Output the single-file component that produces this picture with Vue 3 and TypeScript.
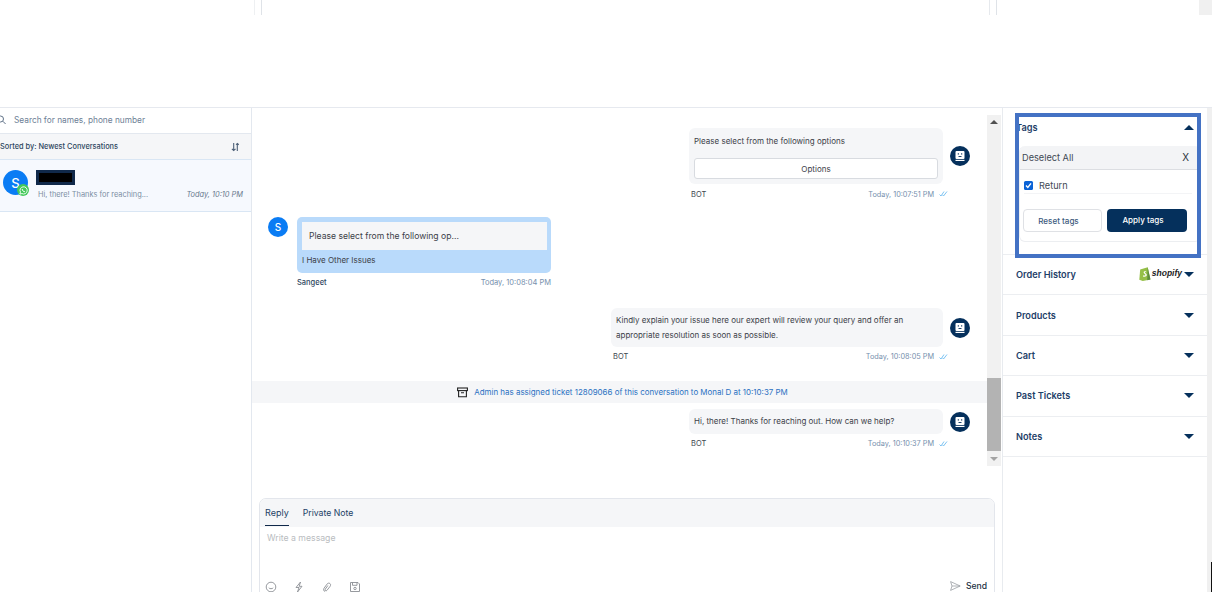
<script setup lang="ts">
interface Section { title: string; shopify?: boolean }
const sections: Section[] = [
  { title: 'Order History', shopify: true },
  { title: 'Products' },
  { title: 'Cart' },
  { title: 'Past Tickets' },
  { title: 'Notes' }
]
</script>

<template>
  <div class="page">
    <div class="strip">
      <i class="s1"></i><i class="s2"></i><i class="s3"></i><i class="s4"></i><i class="s5"></i>
    </div>
    <div class="main">
      <aside class="left">
        <div class="search">
          <svg width="10" height="10" viewBox="0 0 10 10" fill="none" stroke="#5f7187" stroke-width="1"><circle cx="3.5" cy="4" r="3"/><path d="M5.8 6.2 8.6 9"/></svg>
          <span>Search for names, phone number</span>
        </div>
        <div class="sort">
          <span>Sorted by: Newest Conversations</span>
          <svg width="9" height="10" viewBox="0 0 10 11" fill="none" stroke="#4a5d75" stroke-width="1.2"><path d="M3 1v8.5M1 7.5l2 2 2-2M7 10V1.5M5.6 3 7 1.5 8.6 3"/></svg>
        </div>
        <div class="conv">
          <div class="conv-av">
            S
            <span class="wa">
              <svg width="9" height="9" viewBox="0 0 10 10" fill="none" stroke="#fff" stroke-width="1"><path d="M1 9l.6-2.2A4 4 0 1 1 3.2 8.4z"/><path d="M3.6 3.4c0 1.6 1.2 3 3 3" stroke-width="1.1"/></svg>
            </span>
          </div>
          <div class="conv-body">
            <div class="redact"><b></b></div>
            <div class="conv-line">
              <span class="preview">Hi, there! Thanks for reaching...</span>
              <em>Today, 10:10 PM</em>
            </div>
          </div>
        </div>
      </aside>

      <section class="center">
        <div class="scroll-area">
          <div class="thread">
            <div class="msg bot first">
              <div class="stack w254">
                <div class="bubble opt">
                  <p>Please select from the following options</p>
                  <div class="opt-btn">Options</div>
                </div>
                <div class="meta"><span>BOT</span><span class="time">Today, 10:07:51 PM <svg class="tick" width="9" height="6" viewBox="0 0 9 6" fill="none" stroke="#6fbdf0" stroke-width=".9"><path d="M.5 3.5 2 5 5 .5M3.5 3.8 4.5 5l3.5-4.5"/></svg></span></div>
              </div>
              <div class="bot-av"><svg width="12" height="12" viewBox="0 0 12 12"><rect x="1.5" y="1" width="9" height="8" rx="1" fill="#fff"/><rect x="3.8" y="3.2" width="1" height="1.4" fill="#05305c"/><rect x="7.2" y="3.2" width="1" height="1.4" fill="#05305c"/><rect x="4.5" y="6" width="3" height=".9" fill="#05305c"/><rect x="1.5" y="9.8" width="9" height="1.2" fill="#fff"/></svg></div>
            </div>

            <div class="msg user">
              <div class="user-av">S</div>
              <div class="stack w254">
                <div class="bubble blue">
                  <div class="quote">Please select from the following op...</div>
                  <div class="answer">I Have Other Issues</div>
                </div>
                <div class="meta user-meta"><span class="name">Sangeet</span><span class="time">Today, 10:08:04 PM</span></div>
              </div>
            </div>

            <div class="msg bot second">
              <div class="stack w332">
                <div class="bubble long">Kindly explain your issue here our expert will review your query and offer an appropriate resolution as soon as possible.</div>
                <div class="meta"><span>BOT</span><span class="time">Today, 10:08:05 PM <svg class="tick" width="9" height="6" viewBox="0 0 9 6" fill="none" stroke="#6fbdf0" stroke-width=".9"><path d="M.5 3.5 2 5 5 .5M3.5 3.8 4.5 5l3.5-4.5"/></svg></span></div>
              </div>
              <div class="bot-av"><svg width="12" height="12" viewBox="0 0 12 12"><rect x="1.5" y="1" width="9" height="8" rx="1" fill="#fff"/><rect x="3.8" y="3.2" width="1" height="1.4" fill="#05305c"/><rect x="7.2" y="3.2" width="1" height="1.4" fill="#05305c"/><rect x="4.5" y="6" width="3" height=".9" fill="#05305c"/><rect x="1.5" y="9.8" width="9" height="1.2" fill="#fff"/></svg></div>
            </div>

            <div class="system">
              <svg width="11" height="11" viewBox="0 0 11 11" fill="none" stroke="#222" stroke-width="1.1"><rect x=".6" y="1" width="9.8" height="2.6"/><path d="M1.6 3.6v6.2h7.8V3.6M4 5.8h3"/></svg>
              <span>Admin has assigned ticket 12809066 of this conversation to Monal D at 10:10:37 PM</span>
            </div>

            <div class="msg bot third">
              <div class="stack w254">
                <div class="bubble short">Hi, there! Thanks for reaching out. How can we help?</div>
                <div class="meta"><span>BOT</span><span class="time">Today, 10:10:37 PM <svg class="tick" width="9" height="6" viewBox="0 0 9 6" fill="none" stroke="#6fbdf0" stroke-width=".9"><path d="M.5 3.5 2 5 5 .5M3.5 3.8 4.5 5l3.5-4.5"/></svg></span></div>
              </div>
              <div class="bot-av"><svg width="12" height="12" viewBox="0 0 12 12"><rect x="1.5" y="1" width="9" height="8" rx="1" fill="#fff"/><rect x="3.8" y="3.2" width="1" height="1.4" fill="#05305c"/><rect x="7.2" y="3.2" width="1" height="1.4" fill="#05305c"/><rect x="4.5" y="6" width="3" height=".9" fill="#05305c"/><rect x="1.5" y="9.8" width="9" height="1.2" fill="#fff"/></svg></div>
            </div>
          </div>
          <div class="vbar">
            <i class="up"></i>
            <div class="track"><div class="thumb"></div></div>
            <i class="down"></i>
          </div>
        </div>

        <div class="composer">
          <div class="tabs">
            <span class="tab active">Reply</span>
            <span class="tab">Private Note</span>
          </div>
          <div class="write">Write a message</div>
          <div class="tools">
            <div class="tool-icons">
              <svg width="12" height="12" viewBox="0 0 12 12" fill="none" stroke="#8b8f94" stroke-width=".9"><circle cx="6" cy="6" r="4.8"/><path d="M3.8 6.8c.6 1.2 3.8 1.2 4.4 0"/></svg>
              <svg width="12" height="12" viewBox="0 0 12 12" fill="none" stroke="#8b8f94" stroke-width=".9"><path d="M7.5 1 3 6.5h3L4.5 11 9 5.3H6.2z"/></svg>
              <svg width="12" height="12" viewBox="0 0 12 12" fill="none" stroke="#8b8f94" stroke-width=".9"><path d="M4 10.5c-1.5-.6-1.8-2-1-3.2l3-4.2c.8-1 2-1.3 2.9-.6.9.7.9 1.8.2 2.8L6 9.3c-.5.6-1.1.7-1.6.4-.5-.4-.5-1-.1-1.6l2.6-3.6"/></svg>
              <svg width="12" height="12" viewBox="0 0 12 12" fill="none" stroke="#8b8f94" stroke-width=".9"><path d="M1.5 1.5h7.5l1.5 1.5v7.5h-9z"/><path d="M3.5 1.5v2.8h4.5V1.5"/><circle cx="6" cy="7.5" r="1.2"/></svg>
            </div>
            <div class="send">
              <svg width="11" height="10" viewBox="0 0 11 10" fill="none" stroke="#9a9ea3" stroke-width=".8"><path d="M.6.6 10.2 5 .6 9.4 2 5zM2 5h8"/></svg>
              <span>Send</span>
            </div>
          </div>
        </div>
      </section>

      <aside class="right">
        <div class="tags-block">
          <div class="row tags-row">
            <span class="title">Tags</span>
            <i class="caret-up"></i>
          </div>
          <div class="tag-box">
            <div class="deselect"><span>Deselect All</span><span class="x">X</span></div>
            <div class="tag-item">
              <span class="check"><svg width="7" height="7" viewBox="0 0 7 7" fill="none" stroke="#fff" stroke-width="1.4"><path d="M1 3.6 2.8 5.4 6 1.4"/></svg></span>
              <span>Return</span>
            </div>
            <div class="tag-btns">
              <div class="btn reset">Reset tags</div>
              <div class="btn apply">Apply tags</div>
            </div>
          </div>
        </div>
        <div v-for="s in sections" :key="s.title" class="row section">
          <span class="title">{{ s.title }}</span>
          <span class="sec-end">
            <span v-if="s.shopify" class="shopify">
              <svg width="12" height="15" viewBox="0 0 11 14"><path d="M1 3.2 8 1.2 10.6 12.6 3.4 14 .2 12.8z" fill="#95bf47"/><path d="M8 1.2 10.6 12.6 7.6 13.3z" fill="#5e8e3e"/><path d="M6.4 5.1c-.5-.3-2-.4-2.2.8-.2 1.3 1.9 1.4 1.7 2.5-.1.6-1 .8-2 .2l-.3 1.1c1.5.8 3.4.3 3.6-1.2.2-1.5-1.9-1.7-1.7-2.5.1-.5.8-.6 1.6-.2z" fill="#fff"/></svg>
              <span>shopify</span>
            </span>
            <i class="caret-down"></i>
          </span>
        </div>
        <div class="focus-frame"></div>
      </aside>

      <div class="page-bar"><i></i></div>
    </div>
  </div>
</template>

<style>
html, body { margin: 0; background: #fff; overflow: hidden; }
</style>

<style scoped>
.page { width: 1219px; height: 604px; font-family: Inter, "Noto Sans", sans-serif; color: #333; overflow: hidden; background: #fff; }
.strip { height: 15px; width: 1212px; position: relative; }
.strip i { position: absolute; top: 0; height: 15px; display: block; }
.s1 { left: 254px; width: 1px; background: #eef0f2; }
.s2 { left: 261px; width: 1px; background: #dfe3e8; }
.s3 { left: 989px; width: 1px; background: #e6e9ed; }
.s4 { left: 996px; width: 1px; background: #dfe3e8; }
.s5 { left: 1199px; width: 13px; background: #f0f0f0; }

.main { margin-top: 92px; width: 1212px; height: 484px; display: flex; border-top: 1px solid #e6e9ef; overflow: hidden; }

.left { width: 252px; flex: none; border-right: 1px solid #e3e8ef; box-sizing: border-box; }
.search { height: 25px; display: flex; align-items: flex-start; gap: 4px; margin-left: -3px; font-size: 8.3px; line-height: 25px; color: #6d8096; border-bottom: 1px solid #e3e8ef; box-sizing: content-box; }
.search svg { flex: none; margin-top: 7px; }
.search span { margin-left: 3px; }
.sort { height: 25px; display: flex; align-items: center; justify-content: space-between; padding: 0 11px 0 0; background: #f5f6f8; font-size: 7.4px; color: #2e4660; font-weight: 500; border-bottom: 1px solid #d9e6f4; }
.conv { height: 52px; display: flex; padding: 10px 8px 0 3px; box-sizing: border-box; background: #f6f9fe; border-bottom: 1px solid #d9e6f4; }
.conv-av { position: relative; width: 25px; height: 25px; flex: none; border-radius: 50%; background: #0a7cf4; color: #fff; font-size: 13px; font-weight: 500; display: flex; align-items: center; justify-content: center; }
.wa { position: absolute; right: -1px; bottom: -1px; width: 12px; height: 12px; border-radius: 50%; background: #43c95a; display: flex; align-items: center; justify-content: center; }
.conv-body { flex: 1; margin-left: 8px; min-width: 0; }
.redact { width: 39px; height: 15px; background: #10294a; padding: 3px; box-sizing: border-box; }
.redact b { display: block; height: 9px; background: #000; }
.conv-line { display: flex; justify-content: space-between; align-items: center; margin: 5px 0 0 2px; font-size: 7.4px; color: #7b8ea3; }
.conv-line em { color: #66788c; font-style: italic; }

.center { width: 751px; flex: none; display: flex; flex-direction: column; border-right: 1px solid #e8ebef; box-sizing: border-box; }
.scroll-area { height: 359px; display: flex; flex: none; }
.thread { width: 735px; flex: none; display: flex; flex-direction: column; }
.msg { display: flex; align-items: flex-start; }
.msg.bot { justify-content: flex-end; padding-right: 17px; gap: 7px; }
.msg.first { margin-top: 20px; }
.msg.first .meta { margin-top: 6px; height: 8px; }
.msg.user { margin-top: 19px; padding-left: 16px; gap: 9px; }
.msg.second { margin-top: 21px; }
.msg.third { margin-top: 6px; }
.stack { display: flex; flex-direction: column; }
.w254 { width: 254px; }
.w332 { width: 332px; }
.bubble { background: #f5f6f8; border-radius: 6px; font-size: 8px; color: #3c4148; box-sizing: border-box; }
.opt { height: 56px; padding: 7px 5px 0; }
.opt p { margin: 0; line-height: 12px; }
.opt-btn { margin-top: 11px; height: 21px; background: #fff; border: 1px solid #d8dbe0; border-radius: 3px; text-align: center; line-height: 20px; box-sizing: border-box; }
.meta { display: flex; justify-content: space-between; padding: 0 0 0 2px; margin-top: 5px; height: 9px; line-height: 9px; font-size: 7.5px; color: #40474f; }
.time { font-size: 7.3px; color: #7690ad; margin-right: -5px; display: inline-flex; align-items: center; gap: 3px; }
.tick { margin-left: 2px; }
.bot-av { width: 20px; height: 20px; margin-top: 18px; flex: none; border-radius: 50%; background: #05305c; display: flex; align-items: center; justify-content: center; }
.second .bot-av { margin-top: 10px; }
.third .bot-av { margin-top: 3px; }
.user-av { width: 20px; height: 20px; flex: none; border-radius: 50%; background: #0a7cf4; color: #fff; font-size: 10px; font-weight: 500; display: flex; align-items: center; justify-content: center; }
.blue { height: 56px; background: #b9dafb; padding: 5px 4px 0 5px; border-radius: 5px; }
.quote { height: 28px; background: #f5f6f8; padding-left: 7px; line-height: 29px; font-size: 8.6px; }
.answer { margin-top: 6px; line-height: 9px; }
.user-meta { padding-left: 0; }
.user-meta .time { margin-right: 0; font-size: 7.5px; }
.name { color: #2e4660; font-weight: 500; }
.long { height: 39px; padding: 5px; line-height: 15px; }
.short { height: 25px; padding: 0 5px; line-height: 25px; }
.system { margin-top: 20px; height: 22px; background: #f5f6f8; display: flex; align-items: center; justify-content: center; gap: 6px; font-size: 7.95px; color: #2a71c2; padding-left: 6px; }
.vbar { width: 14px; display: flex; flex-direction: column; background: #f1f1f1; margin-top: 7px; height: 351px; }
.track { flex: 1; padding-top: 249px; box-sizing: border-box; }
.thumb { height: 73px; background: #b3b3b3; }
.up, .down { height: 14px; flex: none; display: flex; align-items: center; justify-content: center; }
.up::before { content: ""; border: 4px solid transparent; border-top: 0; border-bottom: 4px solid #505050; }
.down::before { content: ""; border: 4px solid transparent; border-bottom: 0; border-top: 4px solid #a3a3a3; }

.composer { margin: 31px 0 0 7px; width: 736px; height: 100px; flex: none; border: 1px solid #e3e6ec; border-radius: 7px 7px 0 0; box-sizing: border-box; overflow: hidden; position: relative; }
.tabs { height: 28px; background: #f5f6f8; display: flex; gap: 14px; padding-left: 5px; box-sizing: border-box; }
.tab { font-size: 8.7px; color: #1c3f66; line-height: 28px; height: 28px; }
.tab.active { border-bottom: 1.5px solid #10294a; box-sizing: content-box; height: 26px; font-size: 9px; line-height: 27px; }
.write { padding: 5px 7px; font-size: 8.7px; color: #b9bcc0; height: 44px; line-height: 12px; box-sizing: content-box; }
.tools { display: flex; justify-content: space-between; align-items: flex-start; padding: 0 7px 0 5px; }
.tool-icons { display: flex; gap: 16px; }
.send { display: flex; align-items: center; gap: 5px; font-size: 8.6px; font-weight: 500; color: #22303f; }

.right { width: 204px; flex: none; position: relative; }
.tags-block { height: 147px; border-bottom: 1px solid #eceef1; box-sizing: border-box; position: relative; }
.row { display: flex; align-items: center; justify-content: space-between; padding: 0 13px; box-sizing: border-box; }
.tags-row { height: 38px; }
.title { font-size: 9.2px; font-weight: 600; color: #1e4068; }
.tag-box { margin: 0 6px 0 16px; height: 96px; border: 1px solid #eceef1; border-top: 0; border-radius: 6px; box-sizing: border-box; overflow: hidden; }
.deselect { height: 24px; background: #f3f4f6; border-bottom: 1px solid #dcdee2; display: flex; align-items: center; justify-content: space-between; padding: 0 6px 0 2px; font-size: 9.2px; color: #3f4954; box-sizing: border-box; }
.x { color: #2b3440; font-size: 10px; margin: -2px 5px 0 0; }
.tag-item { margin: 7px 8px 0 4px; height: 16px; display: flex; align-items: center; gap: 6px; font-size: 9.2px; color: #3f4954; border-bottom: 1px solid #f3f4f6; }
.check { width: 9px; height: 9px; background: #0b63d6; border-radius: 1.5px; display: flex; align-items: center; justify-content: center; }
.tag-btns { display: flex; gap: 5px; margin: 15px 0 0 3px; }
.btn { width: 79px; height: 23px; padding-right: 8px; border-radius: 4px; font-size: 8.05px; font-weight: 500; text-align: center; line-height: 22px; box-sizing: border-box; }
.reset { border: 1px solid #dfe1e5; background: #fff; color: #3d5a7d; }
.apply { width: 80px; background: #05305c; color: #fff; }
.section { height: 40.4px; border-bottom: 1px solid #eceef1; }
.sec-end { display: flex; align-items: center; gap: 2px; }
.shopify { display: inline-flex; align-items: center; gap: 1px; font-family: "Liberation Sans", sans-serif; font-weight: 700; font-style: italic; font-size: 8.5px; color: #1c1c1c; margin-top: -3px; }
.caret-up, .caret-down { display: block; width: 0; height: 0; border-left: 5px solid transparent; border-right: 5px solid transparent; }
.caret-up { border-bottom: 5px solid #05305c; }
.caret-down { border-top: 5px solid #05305c; }
.focus-frame { position: absolute; left: 12px; top: 5px; width: 186px; height: 145px; border: 4px solid #4472c4; box-sizing: border-box; pointer-events: none; }

.page-bar { width: 5px; flex: none; background: #f0f0f0; position: relative; }
.page-bar i { position: absolute; right: 0; bottom: 0; width: 1px; height: 30px; background: #111; }
</style>
